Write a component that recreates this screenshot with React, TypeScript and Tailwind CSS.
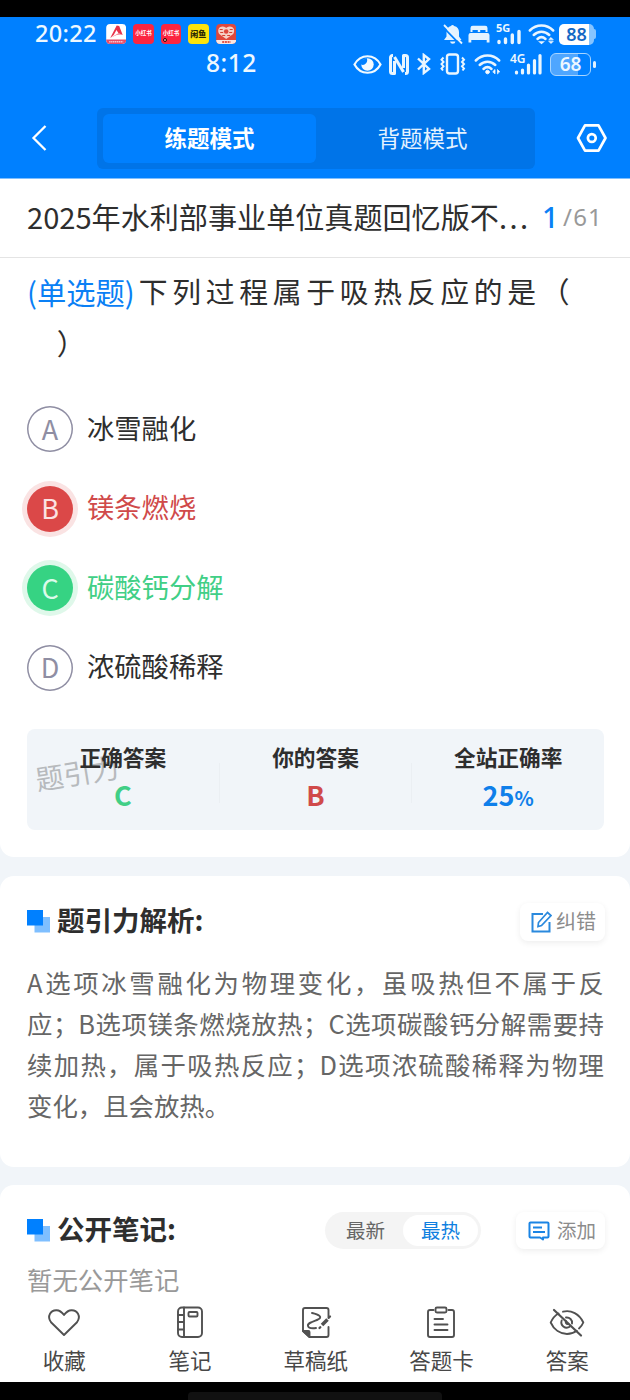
import type { ReactNode } from "react";
import clsx from "clsx";

type OptionState = "idle" | "wrong" | "right";

interface Option {
  key: string;
  text: string;
  state: OptionState;
}

const OPTIONS: Option[] = [
  { key: "A", text: "冰雪融化", state: "idle" },
  { key: "B", text: "镁条燃烧", state: "wrong" },
  { key: "C", text: "碳酸钙分解", state: "right" },
  { key: "D", text: "浓硫酸稀释", state: "idle" },
];

const BADGE_CLASSES: Record<OptionState, string> = {
  idle: "inset-ring-[1.5px] inset-ring-[#8f8ea3] text-[#8f8ea3]",
  wrong: "bg-[#db4848] text-[#fbe3e3] ring-5 ring-[#fae3e3]",
  right: "bg-[#36d383] text-[#dcfaea] ring-5 ring-[#dff8ea]",
};

const TEXT_CLASSES: Record<OptionState, string> = {
  idle: "text-[#2e2e2e]",
  wrong: "text-[#d04a4a]",
  right: "text-[#41cf86]",
};

// Each line is justified on its own, the last one stays left aligned
const ANALYSIS_LINES = [
  "A选项冰雪融化为物理变化，虽吸热但不属于反",
  "应；B选项镁条燃烧放热；C选项碳酸钙分解需要持",
  "续加热，属于吸热反应；D选项浓硫酸稀释为物理",
  "变化，且会放热。",
];

function AppBadges() {
  return (
    <div className="ml-[8px] flex gap-[7px]">
      <svg width="20.4" height="20" viewBox="0 0 20 20">
        <rect width="20" height="20" rx="4" fill="#fff" />
        <path d="M0 15.5h20V16a4 4 0 0 1-4 4H4a4 4 0 0 1-4-4z" fill="#e84d68" />
        <path d="M4 14 10.5 1.5 13 2l3.5 9-4-1.5L10.3 6 7.5 11z" fill="#e8334a" />
        <path d="m4 14 8.5-5 3 1.5-5 .5z" fill="#f58696" />
        <path d="M3 17.8h14" stroke="#f9c3cd" strokeWidth="1.6" strokeDasharray="1.4 .5" />
      </svg>
      <div className="flex size-[20.4px] items-center justify-center rounded-[4px] bg-[#fb2540] text-[5.5px] leading-none font-bold whitespace-nowrap text-white">
        小红书
      </div>
      <div className="relative flex size-[20.4px] items-center justify-center rounded-[4px] bg-[#fb2540] text-[5.5px] leading-none font-bold whitespace-nowrap text-white">
        小红书
        <span className="absolute bottom-[2px] left-[2px] size-[4.5px] rounded-full border-[1.5px] border-[#2b0508] bg-[#ffb0b0]" />
      </div>
      <div className="flex size-[20.4px] items-center justify-center rounded-[4px] bg-[#fde30c] text-[8px] leading-none font-black whitespace-nowrap text-[#2d2a05]">
        闲鱼
      </div>
      <svg width="20.4" height="20" viewBox="0 0 20 20">
        <rect width="20" height="20" rx="4" fill="#e0473c" />
        <path d="M10 15 3 10C1 7 2 2.500 6.500 2.500 8.500 2.500 10 4 10 4s1.500-1.500 3.500-1.500C18 2.500 19 7 17 10z" fill="#f6cfc6" />
        <circle cx="10" cy="7.5" r="2.3" fill="#e0473c" />
        <path d="M3.500 5.500h3M13.500 5.500h3M4 8.500h3M13 8.500h3M6 11.500h3M11 11.500h3" stroke="#d8402f" strokeWidth="1.100" />
        <path d="M0 16h20a4 4 0 0 1-4 4H4a4 4 0 0 1-4-4z" fill="#fbe6df" />
        <path d="M6 18h8.500" stroke="#e2564a" strokeWidth="1.800" strokeDasharray="2 .7" />
      </svg>
    </div>
  );
}

function Wifi({ children }: { children: ReactNode }) {
  return (
    <svg width="28" height="23" viewBox="0 0 28 23" fill="none" stroke="#e9f5ff" strokeWidth="2.5" strokeLinecap="round">
      <path d="M1.8 7.5C8.5.8 18.5.8 25.2 7.5" />
      <path d="M5.700 12c4.600-4.500 11-4.500 15.600 0" />
      <path d="M9.500 16c2.500-2.300 5.500-2.300 8 0" />
      {children}
    </svg>
  );
}

function StatusBar() {
  return (
    <div className="h-[72px] text-[#eef8ff]">
      <div className="flex h-[34px] items-center pr-[34px] pl-[35px]">
        <span className="w-[63px] font-['Noto_Sans'] text-[23.5px] leading-none font-medium tracking-[0.3px]">20:22</span>
        <AppBadges />
        <div className="ml-auto flex items-center">
          <svg width="20" height="21" viewBox="0 0 20 21">
            <path d="M9.5 1a2 2 0 0 1 1.600.9C14.500 2.600 16 5 16 8v4.500l2.500 3.500H1L3.500 12.500V8c0-3 1.700-5.300 4.500-6.100A2 2 0 0 1 9.500 1zM7 17.500h5.500a2.800 2.800 0 0 1-5.500 0z" fill="#e4f3ff" />
            <path d="m-1 2 18 18.500" stroke="#0080ff" strokeWidth="1.800" />
            <path d="m1 1 18 18.500" stroke="#e9f5ff" strokeWidth="1.800" />
          </svg>
          <svg className="ml-[5px]" width="22" height="18" viewBox="0 0 22 18" fill="#e4f3ff">
            <path d="M2.500 7V3A2.300 2.300 0 0 1 4.800.7h12.400A2.300 2.300 0 0 1 19.500 3v4h-2V5h-5.300v2H9.800V5H4.500v2z" />
            <path d="M2.500 8h17A2.200 2.200 0 0 1 21.500 10v7.500h-2.800V15H3.300v2.500H.5V10a2.200 2.200 0 0 1 2-2z" />
          </svg>
          <div className="relative ml-[6px] h-[22px] w-[26px]">
            <span className="absolute -top-[1px] left-0 font-['Noto_Sans'] text-[11px] leading-none font-bold">5G</span>
            <svg width="26" height="22" viewBox="0 0 26 22" stroke="#e9f5ff" strokeWidth="3.4" strokeLinecap="round">
              <path d="M3 18.500v1M9.500 16v3.500M16.300 12v7.500M23 8.500v11" />
            </svg>
          </div>
          <div className="ml-[6px] flex">
            <Wifi>
              <path d="m12 19 1.500 1.300L15 19z" strokeWidth="1.5" fill="#fff" />
              <path d="m21 16.500 2-2 2 2zM21 18.500l2 2 2-2z" strokeWidth=".8" fill="#fff" />
            </Wifi>
          </div>
          <div className="ml-[3px] flex h-[21px] w-[37px] items-center">
            <div className="flex h-[21px] w-[35px] items-center justify-center rounded-[5px] bg-linear-to-r from-white from-86% to-[#86c4ff] to-86% font-['Noto_Sans'] text-[18px] leading-none font-semibold text-[#1568c4]">
              88
            </div>
            <span className="h-[10px] w-[2px] rounded-r-full bg-[#86c4ff]" />
          </div>
        </div>
      </div>
      <div className="flex h-[26px] items-center pr-[34px] pl-[206px]">
        <span className="pb-[2px] font-['Noto_Sans'] text-[24.5px] leading-none font-medium tracking-[0.5px]">8:12</span>
        <div className="ml-auto flex items-center">
          <svg width="29" height="21" viewBox="0 0 29 21">
            <path d="M1.500 10.500C7.500-.5 21.500-.5 27.500 10.500 21.500 21.500 7.500 21.500 1.500 10.500z" fill="none" stroke="#f2faff" strokeWidth="2.200" />
            <circle cx="14.500" cy="10.500" r="6.200" fill="#f2faff" />
            <path d="M13.500 4a4.500 4.500 0 0 1-5.500 6.500L7.500 7z" fill="#0080ff" />
          </svg>
          <svg className="ml-[7px]" width="20" height="21" viewBox="0 0 20 21" fill="none" stroke="#eaf6ff" strokeWidth="3" strokeLinejoin="round">
            <path d="M4 1.500H3.500a2 2 0 0 0-2 2v14a2 2 0 0 0 2 2h2V7" />
            <path d="M16 19.500h.5a2 2 0 0 0 2-2v-14a2 2 0 0 0-2-2h-2V14" />
            <path d="m5.500 3 9 15" />
          </svg>
          <svg className="ml-[8px]" width="14" height="22" viewBox="0 0 14 22" fill="none" stroke="#eaf6ff" strokeWidth="2.400">
            <path d="m1 5.500 11 10.500-5.200 4v-18L12 6 1 16.500" />
          </svg>
          <svg className="ml-[8px]" width="28" height="22" viewBox="0 0 28 22" fill="none" stroke="#eaf6ff">
            <rect x="8" y="1.500" width="11" height="19" rx="2.500" strokeWidth="2.400" />
            <path d="m4.500 4.500-2 2.200 2 2.200-2 2.200 2 2.200-2 2.200 1.500 2M23 4.500l2 2.200-2 2.200 2 2.200-2 2.200 2 2.200-1.500 2" strokeWidth="2" />
          </svg>
          <div className="ml-[7px] flex">
            <Wifi>
              <circle cx="13.500" cy="19" r="1.800" fill="#fff" strokeWidth="1" />
              <path d="m19 18.500 2-2v4zM25.500 18.500l-2-2v4z" strokeWidth=".8" fill="#fff" />
            </Wifi>
          </div>
          <div className="relative ml-[8px] h-[22px] w-[33px]">
            <span className="absolute top-0 left-0 font-['Noto_Sans'] text-[12px] leading-none font-semibold">4G</span>
            <svg width="33" height="22" viewBox="0 0 33 22" stroke="#eaf6ff" strokeWidth="3.2" strokeLinecap="round">
              <path d="M6.500 19v1M12.500 17v3M18.500 12v8M24.500 7.500V20M30 2.500V20" />
            </svg>
          </div>
          <div className="ml-[7px] flex h-[23px] w-[46px] items-center gap-[2px]">
            <div className="flex h-[23px] w-[41px] items-center justify-center rounded-[6px] border-[1.500px] border-[#a8d5ff] bg-linear-to-r from-[#4fa6ff] from-68% to-[#0080ff] to-68% font-['Noto_Sans'] text-[19px] leading-none font-semibold">
              68
            </div>
            <span className="h-[7px] w-[2.5px] rounded-full bg-[#e1f1ff]" />
          </div>
        </div>
      </div>
    </div>
  );
}

function ModeHeader() {
  return (
    <div className="flex h-[89px] items-center pt-[9px]">
      <svg className="ml-[31px]" width="17" height="28" viewBox="0 0 17 28" fill="none" stroke="#fff" strokeWidth="2.3">
        <path d="M14.500 2 2.500 14l12 12" />
      </svg>
      <div className="ml-[49px] flex h-[61px] w-[438px] rounded-[6px] bg-[#0074e8] p-[6px] text-[22.5px] leading-none">
        <div className="flex w-[213px] items-center justify-center rounded-[6px] bg-[#0080ff] pb-[2px] font-bold text-white">
          练题模式
        </div>
        <div className="flex flex-1 items-center justify-center pb-[2px] text-[#e4f2ff]">背题模式</div>
      </div>
      <svg className="ml-[41px]" width="32" height="30" viewBox="0 0 32 30" fill="none" stroke="#fff" strokeWidth="2.7" strokeLinejoin="round">
        <path d="M9 2.300h13.500L29.500 15l-7 12.700H9L2 15z" />
        <circle cx="15.800" cy="15" r="3.900" />
      </svg>
    </div>
  );
}

function SectionTitle({ children }: { children: ReactNode }) {
  return (
    <div className="flex items-center">
      <svg className="mr-[7px]" width="23" height="23" viewBox="0 0 23 23">
        <path d="M7.500 7H23v15.500H7.500z" fill="#7fbfff" />
        <path d="M0 0h16v15.500H0z" fill="#0080ff" />
      </svg>
      <h2 className="-mt-[3px] text-[27.5px] leading-none font-bold text-[#2e2e2e]">{children}</h2>
    </div>
  );
}

function Stat({ label, color, children }: { label: string; color: string; children: ReactNode }) {
  return (
    <div className="flex flex-1 flex-col items-center">
      <div className="text-[21.7px] leading-[30px] font-bold text-[#2e2e2e]">{label}</div>
      <div className={clsx("mt-[8px] text-[27px] leading-[30px] font-bold", color)}>{children}</div>
    </div>
  );
}

function NavItem({ label, children }: { label: string; children: ReactNode }) {
  return (
    <div className="flex flex-1 flex-col items-center">
      <svg width="36" height="34" viewBox="0 0 36 34" fill="none" stroke="#515151" strokeWidth="1.9" strokeLinecap="round" strokeLinejoin="round">
        {children}
      </svg>
      <span className="mt-[10px] text-[21.5px] leading-none text-[#484848]">{label}</span>
    </div>
  );
}

function BottomNav() {
  return (
    <nav className="flex h-[77px] bg-white pl-[1.5px]">
      <NavItem label="收藏">
        <path d="M18 30 5 17.200C.5 11 5 5 10.500 5.200c3.500.1 5.500 2 7.500 4.700 2-2.700 4-4.600 7.500-4.700C31 5 35.500 11 31 17.200z" />
      </NavItem>
      <NavItem label="笔记">
        <rect x="6" y="2.500" width="24" height="29.500" rx="4" />
        <path d="M12 2.500V32M6 10h6M6 17h6M6 24.500h6" />
        <rect x="16.500" y="7" width="9" height="4.500" rx="1" />
      </NavItem>
      <NavItem label="草稿纸">
        <path d="M30.500 13V5a2 2 0 0 0-2-2H7a2 2 0 0 0-2 2v21l6.500 6h17a2 2 0 0 0 2-2v-8" />
        <path d="M5 26h5.500q1 0 1 1v5z" fill="#515151" />
        <path d="M14 8c7 1.500 11 4 6 6.500-5 2-11 3.500-10 6.500.5 2 4 2.500 8 2" />
        <path d="m24 20 5.500-5.500" strokeWidth="3.600" strokeLinecap="butt" />
        <path d="m21.500 23 .8-.8M31 12.500l1-1" strokeWidth="2.300" />
      </NavItem>
      <NavItem label="答题卡">
        <path d="M10.500 5H7a2 2 0 0 0-2 2v23a2 2 0 0 0 2 2h22a2 2 0 0 0 2-2V7a2 2 0 0 0-2-2h-3.500" />
        <rect x="12.500" y="2.500" width="11" height="5" rx="1.500" />
        <path d="M11.500 14H20M11.500 19.500h13M11.500 25h13" />
      </NavItem>
      <NavItem label="答案">
        <path d="M9.500 8.500C6 10.500 3.500 13.300 1.700 17.500 5 25 11.500 29 18 29c3.500 0 7-1.200 9.800-3.300M14 6.700c8-2.200 16.500 2.300 20.300 10.800-1 2.500-2.500 4.500-4.300 6" />
        <path d="M12.700 15.500c-1.800 4.500 3.500 9.200 8 6.300M17 12.500c3.500-.5 6.700 2.500 6 6" />
        <path d="M17 16a2 2 0 0 0 2 3" />
        <path d="m5 5 27 25.500" strokeWidth="2.200" />
      </NavItem>
    </nav>
  );
}

export default function App() {
  return (
    <div
      lang="zh-CN"
      className="flex h-[1400px] w-[630px] flex-col overflow-hidden bg-black font-['Noto_Sans_CJK_SC',sans-serif]"
    >
      <header className="mt-[17px] h-[162px] shrink-0 border-b border-[#7fbfff] bg-[#0080ff]">
        <StatusBar />
        <ModeHeader />
      </header>

      <main className="flex h-[1126px] shrink-0 flex-col gap-[18.5px] overflow-hidden bg-[#f1f5f9]">
        <section className="h-[678px] shrink-0 rounded-b-[14px] bg-white">
          <div className="flex h-[79px] items-center border-b border-[#e4e4e4] pb-[3px] pl-[27px] leading-none whitespace-nowrap">
            <h1 className="w-[515px] text-[29.1px] leading-none text-[#2e2e2e]">
              2025年水利部事业单位真题回忆版不<span className="tracking-[2.4px]">...</span>
            </h1>
            <span className="w-[17px] font-['Noto_Sans'] text-[29px] font-medium text-[#0a80f5]">1</span>
            <span className="ml-[4px] font-['Noto_Sans'] text-[24px] tracking-[1.2px] text-[#999]">/61</span>
          </div>

          <div className="h-[120px] pt-[7px] pl-[27px] text-[28.8px] leading-[52px] whitespace-pre text-[#2e2e2e]">
            <div className="flex">
              <span className="text-[29.3px] text-[#0a80f5]">(单选题)</span>
              <span className="ml-[4px] tracking-[4.7px]">下列过程属于吸热反应的是（</span>
            </div>
            <div className="pl-[1px]">{"　）"}</div>
          </div>

          <ul className="mt-[28px] flex flex-col gap-[33.5px] pl-[27px]">
            {OPTIONS.map((option) => (
              <li key={option.key} className="flex h-[46px] items-center gap-[14px]">
                <span
                  className={clsx(
                    "flex size-[46px] items-center justify-center rounded-full pb-[2px] text-[27px] leading-none",
                    BADGE_CLASSES[option.state],
                  )}
                >
                  {option.key}
                </span>
                <span className={clsx("pb-[3px] text-[27.3px] leading-none", TEXT_CLASSES[option.state])}>
                  {option.text}
                </span>
              </li>
            ))}
          </ul>

          <div className="relative mr-[26px] ml-[27px] mt-[38px] flex h-[101px] rounded-[8px] bg-[#f1f5f9] pt-[13px]">
            <span className="absolute top-[29px] left-[8px] -rotate-9 text-[28px] leading-none text-[#b7babd]">题引力</span>
            <div className="relative flex flex-1">
              <Stat label="正确答案" color="text-[#41cf86]">C</Stat>
              <div className="mt-[21px] h-[40px] w-px bg-[#ebeff3]" />
              <Stat label="你的答案" color="text-[#d04a4a]">B</Stat>
              <div className="mt-[21px] h-[40px] w-px bg-[#ebeff3]" />
              <Stat label="全站正确率" color="text-[#0f7fea]">
                25<span className="text-[20px]">%</span>
              </Stat>
            </div>
          </div>
        </section>

        <section className="h-[291px] shrink-0 rounded-[14px] bg-white pr-[25px] pl-[27px] pt-[27px]">
          <div className="flex h-[38px] items-center justify-between">
            <SectionTitle>题引力解析:</SectionTitle>
            <button className="flex h-[38px] w-[85px] items-center justify-center gap-[4px] rounded-[8px] bg-white pl-[2px] text-[20px] leading-none text-[#8c8c8c] shadow-[0_2px_6px_rgba(0,0,0,0.07)]">
              <svg width="21" height="22" viewBox="0 0 21 22" fill="none" stroke="#2a89dd" strokeWidth="2">
                <path d="M12 3H1.500v17.500h17V11" />
                <path d="M16.500 1.500 20 4.500 10.500 14.500 7 15.500l.5-4z" strokeWidth="1.700" />
              </svg>
              <span className="pb-[2px]">纠错</span>
            </button>
          </div>
          <div className="mt-[21px] mr-px text-[25.4px] leading-[41px] text-[#666]">
            {ANALYSIS_LINES.map((line, i) => (
              <p
                key={line}
                className={clsx("whitespace-nowrap", i < ANALYSIS_LINES.length - 1 && "[text-align-last:justify]")}
              >
                {line}
              </p>
            ))}
          </div>
        </section>

        <section className="flex-1 rounded-t-[14px] bg-white pr-[25px] pl-[27px] pt-[27px]">
          <div className="flex h-[37px] items-center">
            <SectionTitle>公开笔记:</SectionTitle>
            <div className="ml-auto flex h-[37px] w-[156px] items-center rounded-full bg-[#f4f4f4] p-[3px] text-[19.5px] leading-none">
              <span className="w-[75px] pb-[1px] text-center text-[#666]">最新</span>
              <span className="flex h-[31px] flex-1 items-center justify-center rounded-full bg-white pb-[1px] text-[#0f7fe0]">最热</span>
            </div>
            <button className="ml-[35px] flex h-[37px] w-[89px] items-center justify-center gap-[7px] rounded-[8px] bg-white pl-[3px] text-[19.5px] leading-none text-[#8c8c8c] shadow-[0_2px_6px_rgba(0,0,0,0.07)]">
              <svg width="22" height="20" viewBox="0 0 22 20" fill="none" stroke="#1a84e4" strokeWidth="2" strokeLinejoin="round">
                <path d="M2.500 1.500h17a1 1 0 0 1 1 1v13a1 1 0 0 1-1 1h-4.500v2l-3-2H2.500a1 1 0 0 1-1-1v-13a1 1 0 0 1 1-1z" />
                <path d="M5 6.500h9M5 11h12" />
              </svg>
              <span className="pb-[1px]">添加</span>
            </button>
          </div>
          <p className="mt-[18px] text-[25.4px] leading-none text-[#999]">暂无公开笔记</p>
        </section>
      </main>

      <BottomNav />

      <div className="mx-auto mt-[10px] h-[8px] w-[254px] shrink-0 rounded-t-[4px] bg-[#111]" />
    </div>
  );
}
